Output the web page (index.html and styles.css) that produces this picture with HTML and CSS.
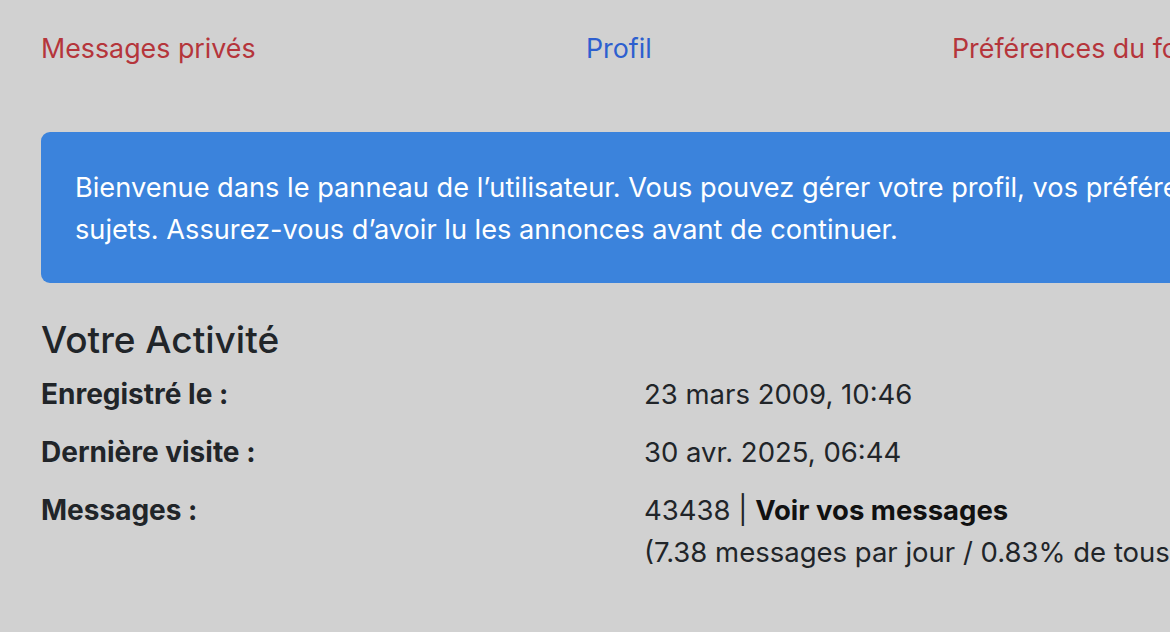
FILE: index.html
```html
<!DOCTYPE html>
<html lang="fr">
<head>
  <meta charset="UTF-8">
  <meta name="viewport" content="width=device-width, initial-scale=1.0">
  <title>Panneau de l'utilisateur</title>
  <link rel="stylesheet" href="styles.css">
</head>
<body>
  <div id="page">
    <nav class="tabs">
      <a href="#" class="tab">Messages privés</a>
      <a href="#" class="tab active">Profil</a>
      <a href="#" class="tab">Préférences du forum</a>
    </nav>

    <div class="alert">
      Bienvenue dans le panneau de l’utilisateur. Vous pouvez gérer votre profil, vos préférences et vos<br>
      sujets. Assurez-vous d’avoir lu les annonces avant de continuer.
    </div>

    <h2 class="section-title">Votre Activité</h2>
    <dl class="stats">
      <dt>Enregistré le :</dt>
      <dd>23 mars 2009, 10:46</dd>
      <dt>Dernière visite :</dt>
      <dd>30 avr. 2025, 06:44</dd>
      <dt>Messages :</dt>
      <dd>43438 | <strong>Voir vos messages</strong><br>(7.38 messages par jour / 0.83% de tous les messages)</dd>
    </dl>
  </div>
</body>
</html>
```
FILE: styles.css
```css
:root { font-family: Inter, "Noto Sans", sans-serif; --bg:#d1d1d1; --fg:#212529; --red:#b5353b; --blue:#2d5fcf; --alert:#3b83dc; }
html,body{margin:0;background:var(--bg);color:var(--fg);overflow:hidden;}
#page{width:1400px;padding:0 0 0 41px;}
.tabs{display:grid;grid-template-columns:545px 366px 1fr;padding:28px 0 0;height:132px;box-sizing:border-box;white-space:nowrap;}
.tab{font-size:26.8px;line-height:40px;color:var(--red);text-decoration:none;}
.tab.active{color:var(--blue);}
.alert{background:var(--alert);color:#fff;border-radius:9px;padding:35px 34px 32px;font-size:27.2px;line-height:42px;white-space:nowrap;}
.section-title{margin:34px 0 0;font-size:37px;font-weight:500;line-height:46px;}
.stats{display:grid;grid-template-columns:603px 1fr;margin:10px 0 0;font-size:27.5px;line-height:42px;row-gap:16px;white-space:nowrap;}
.stats dt{font-weight:700;font-size:28px;}
.stats dd{margin:0;}
.stats strong{color:#111;}
```
